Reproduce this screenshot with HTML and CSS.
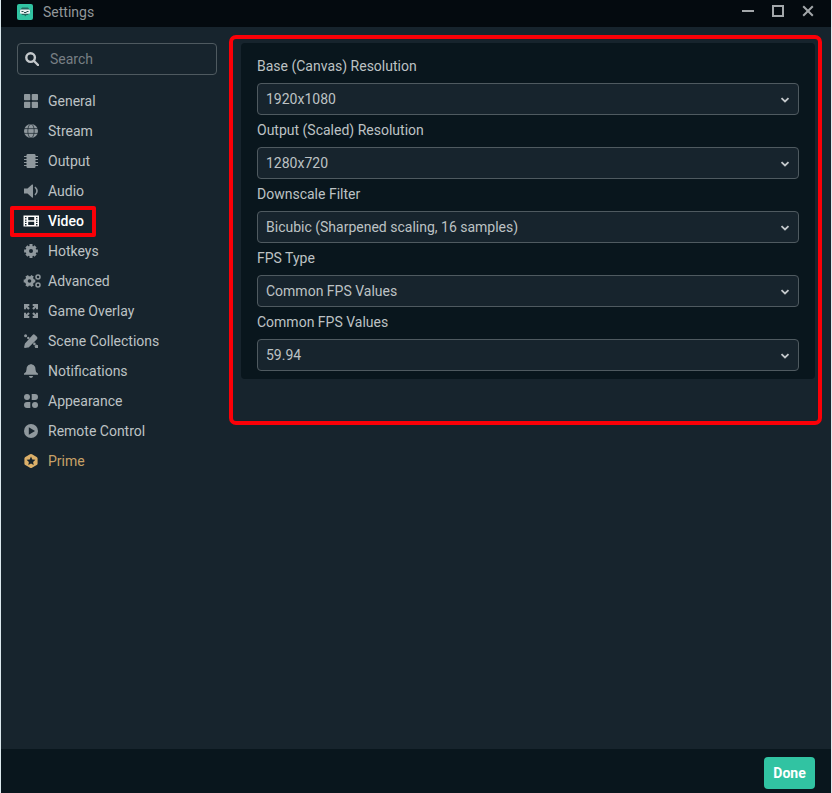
FILE: index.html
```html
<!DOCTYPE html>
<html lang="en">

<head>
    <meta charset="UTF-8">
    <title>Settings</title>
    <link rel="stylesheet" href="styles.css">
</head>

<body>
    <div class="window">
        <header class="titlebar">
            <svg class="logo" viewBox="0 0 16 16">
                <rect width="16" height="16" rx="2" fill="#31c3a2"/>
                <path d="M5 3.5h6L13.5 7 11 11H9.5L8 12.5 7.5 11H5L2.5 7z" fill="#24665f"/>
                <rect x="3" y="5.500" width="10" height="4.200" rx="1" fill="#e9f4f3"/>
                <path d="M4.500 7.500h2M9.500 7.500h2M7 8.500h2.500" stroke="#24494a"/>
            </svg>
            <span class="title">Settings</span>
            <div class="controls">
                <svg viewBox="0 0 12 12"><path d="M0 6h12" stroke-width="2"/></svg>
                <svg viewBox="0 0 12 12"><rect x="1" y="1" width="10" height="10" stroke-width="2"/></svg>
                <svg viewBox="0 0 12 12"><path d="M1.200 1.200l9.600 9.600M10.800 1.200l-9.600 9.600" stroke-width="2"/></svg>
            </div>
        </header>

        <div class="content">
            <aside class="sidebar">
                <div class="search">
                    <svg viewBox="0 0 14 14"><circle cx="5.600" cy="5.600" r="4.300"/><path d="M9 9l4 4"/></svg>
                    <input type="text" placeholder="Search">
                </div>
                <ul class="nav">
                    <li>
                        <svg viewBox="0 0 14 14"><rect width="6.300" height="6.300" rx=".8"/><rect x="7.700" width="6.300" height="6.300" rx=".8"/><rect y="7.700" width="6.300" height="6.300" rx=".8"/><rect x="7.700" y="7.700" width="6.300" height="6.300" rx=".8"/></svg>
                        General
                    </li>
                    <li>
                        <svg viewBox="0 0 14 14"><circle cx="7" cy="7" r="7"/><g class="cut"><ellipse cx="7" cy="7" rx="3.200" ry="7"/><path d="M0 4.600h14M0 9.400h14"/></g></svg>
                        Stream
                    </li>
                    <li>
                        <svg viewBox="0 0 14 14"><rect x="2.500" width="9" height="14" rx="1.200"/><path class="line" d="M0 2.500h14M0 5.500h14M0 8.500h14M0 11.500h14"/></svg>
                        Output
                    </li>
                    <li>
                        <svg viewBox="0 0 14 14"><path d="M0 4.500h3.500L8 .6Q9 0 9 1v12q0 1-1 .4L3.500 9.500H0z"/><path class="line thick" d="M11 3q4 4 0 8"/></svg>
                        Audio
                    </li>
                    <li class="active">
                        <svg viewBox="0 0 14 14"><path fill-rule="evenodd" d="M-.5 1.500h15.500v11H-.5zM1 3v1.300h1.500V3zm0 2.400v1.300h1.500V5.400zm0 2.400v1.300h1.500V7.800zm0 2.300v1.300h1.500v-1.300zM4.200 3v3.200h6V3zm0 4.700v3.300h6V7.700zM12 3v1.300h1.500V3zm0 2.400v1.300h1.500V5.400zm0 2.400v1.300h1.500V7.800zm0 2.300v1.300h1.500v-1.300z"/></svg>
                        Video
                        <span class="mark"></span>
                    </li>
                    <li>
                        <svg viewBox="0 0 14 14"><path class="teeth" d="M7 .1v13.800M.1 7h13.800M2.400 2.400l9.200 9.200M11.600 2.400l-9.200 9.200"/><circle cx="7" cy="7" r="5.300"/><circle class="hole" cx="7" cy="7" r="2"/></svg>
                        Hotkeys
                    </li>
                    <li>
                        <svg viewBox="0 0 14 14"><path class="teeth" d="M2.700 1.700l5.800 10.600M8.500 1.700L2.700 12.300M-.3 7h11.600"/><circle cx="5.500" cy="7" r="4.700"/><circle class="hole" cx="5.500" cy="7" r="1.800"/><circle class="ring" cx="14" cy="3" r="2"/><circle class="ring" cx="14" cy="11" r="2"/></svg>
                        Advanced
                    </li>
                    <li>
                        <svg viewBox="0 0 14 14"><path d="M0 0h5.300v2H3.600l2.200 2.200-1.600 1.600L2 3.600v1.700H0zM14 0v5.300h-2V3.600L9.800 5.800 8.200 4.200 10.400 2H8.700V0zM0 14V8.700h2v1.700l2.200-2.200 1.600 1.600L3.600 12h1.700v2zM14 14H8.700v-2h1.700L8.200 9.800l1.600-1.600 2.200 2.200V8.700h2z"/></svg>
                        Game Overlay
                    </li>
                    <li>
                        <svg viewBox="0 0 14 14"><path d="M8.600.9q1.200-1.200 2.400 0l1.900 1.900q1.200 1.200 0 2.400l-7.800 7.700q-.5.500-1.200.6L1 14q-1 0-.9-1l.7-3q.1-.6.6-1.100z"/><circle cx="1.600" cy="1.800" r="1.500"/><circle cx="4.300" cy="4" r="1.200"/><circle cx="10.400" cy="9.900" r="1.300"/><path d="M12 10.500l2 .8V14h-2.700l-.8-2z"/></svg>
                        Scene Collections
                    </li>
                    <li>
                        <svg viewBox="0 0 14 14"><path d="M6 .6q1-1 2 0 3.500.8 3.500 4.900 0 2.700 1.900 3.500.9.500.6 1.700H0Q-.3 9.500.6 9q1.900-.8 1.900-3.500Q2.500 1.400 6 .6zM4.800 12h4.400Q8.500 14 7 14t-2.200-2z"/></svg>
                        Notifications
                    </li>
                    <li>
                        <svg viewBox="0 0 14 14"><circle cx="3" cy="3" r="3"/><path d="M7.700 0H11q3 0 3 3t-3 3H7.700zM6.300 14H3q-3 0-3-3t3-3h3.300z"/><circle cx="11" cy="11" r="3"/></svg>
                        Appearance
                    </li>
                    <li>
                        <svg viewBox="0 0 14 14"><circle cx="7" cy="7" r="7"/><path class="hole" d="M4.800 3.300L11 7l-6.200 3.700z"/></svg>
                        Remote Control
                    </li>
                    <li class="prime">
                        <svg viewBox="0 0 14 14"><path d="M6 .3q1-.6 2 0l4.700 2.600q.9.600.9 1.600v5q0 1-.9 1.600L8 13.700q-1 .6-2 0l-4.700-2.600q-.9-.6-.9-1.600v-5q0-1 .9-1.600z"/><path class="hole" d="M7 2.600l1.300 2.800 3.100.4L9.100 8l.6 3L7 9.500 4.300 11l.6-3-2.300-2.200 3.100-.4z"/></svg>
                        Prime
                    </li>
                </ul>
            </aside>

            <main class="main">
                <div class="panel">
                    <label>Base (Canvas) Resolution</label>
                    <div class="select">1920x1080 <svg viewBox="0 0 8 6"><path d="M.5 1.200L4 4.500l3.500-3.300"/></svg></div>
                    <label>Output (Scaled) Resolution</label>
                    <div class="select">1280x720 <svg viewBox="0 0 8 6"><path d="M.5 1.200L4 4.500l3.500-3.300"/></svg></div>
                    <label>Downscale Filter</label>
                    <div class="select">Bicubic (Sharpened scaling, 16 samples) <svg viewBox="0 0 8 6"><path d="M.5 1.200L4 4.500l3.500-3.300"/></svg></div>
                    <label>FPS Type</label>
                    <div class="select">Common FPS Values <svg viewBox="0 0 8 6"><path d="M.5 1.200L4 4.500l3.500-3.300"/></svg></div>
                    <label>Common FPS Values</label>
                    <div class="select">59.94 <svg viewBox="0 0 8 6"><path d="M.5 1.200L4 4.500l3.500-3.300"/></svg></div>
                </div>
            </main>
        </div>

        <footer class="footer">
            <button class="button">Done</button>
        </footer>
    </div>
</body>

</html>
```
FILE: styles.css
```css
* {
    box-sizing: border-box;
}

body {
    margin: 0;
    background: #dce9ee;
    font-family: Roboto, sans-serif;
    font-size: 14px;
    color: #bdc2c4;
}

.window {
    display: flex;
    flex-direction: column;
    height: 793px;
    margin: 0 1px;
    background: #17242d;
}

/* Title bar */

.titlebar {
    display: flex;
    align-items: center;
    height: 27px;
    padding: 0 17px 3px 16px;
    background: #040a0f;
    color: #92979a;
}

.logo {
    width: 16px;
    height: 16px;
    margin-right: 10px;
}

.title {
    flex: 1;
}

.controls {
    display: flex;
    gap: 18px;
    margin-top: -2px;
}

.controls svg {
    width: 12px;
    height: 12px;
    fill: none;
    stroke: #a3a7aa;
}

.content {
    display: flex;
    flex: 1;
}

/* Sidebar */

.sidebar {
    width: 228px;
    padding: 16px 12px 0 16px;
}

.search {
    display: flex;
    align-items: center;
    width: 200px;
    height: 32px;
    padding-left: 7px;
    border: 1px solid #4f5a60;
    border-radius: 4px;
}

.search svg {
    width: 14px;
    height: 14px;
    fill: none;
    stroke: #c4c9cc;
    stroke-width: 2.4;
    stroke-linecap: round;
}

.search input {
    width: 150px;
    margin-left: 11px;
    padding: 0;
    border: none;
    outline: none;
    background: none;
    font: inherit;
    color: #bdc2c4;
}

.search input::placeholder {
    color: #787f84;
    opacity: 1;
}

.nav {
    margin: 11px 0 0;
    padding: 0 0 0 7px;
    list-style: none;
}

.nav li {
    position: relative;
    display: flex;
    align-items: center;
    gap: 10px;
    height: 30px;
    white-space: nowrap;
}

.nav svg {
    width: 14px;
    height: 14px;
    overflow: visible;
    fill: #8f989d;
}

.nav .cut,
.nav .line,
.nav .ring {
    fill: none;
    stroke: #17242d;
    stroke-width: 0.7;
}

.nav .line {
    stroke: #8f989d;
    stroke-width: 1;
}

.nav .thick {
    stroke-width: 1.6;
}

.nav .ring {
    stroke: #8f989d;
    stroke-width: 1.5;
}

.nav .teeth {
    stroke: #8f989d;
    stroke-width: 3;
}

.nav .hole {
    fill: #17242d;
}

.nav .active {
    color: #fff;
    font-weight: 500;
}

.nav .active svg {
    fill: #fff;
}

.nav .prime {
    color: #c7a167;
}

.nav .prime svg {
    fill: #dcb069;
}

/* Red frame around the current page */

.mark {
    position: absolute;
    left: -14px;
    top: 0;
    width: 86px;
    height: 31px;
    border: 4px solid #fb0007;
    border-radius: 2px;
}

/* Settings form */

.main {
    width: 593px;
    height: 390px;
    margin-top: 8px;
    padding: 4px 3px 0 8px;
    border: 4px solid #fb0007;
    border-radius: 7px;
}

.panel {
    padding: 8px 16px;
    border-radius: 4px;
    background: #09161d;
}

.panel label {
    display: block;
    height: 32px;
    line-height: 30px;
}

.select {
    display: flex;
    align-items: center;
    justify-content: space-between;
    height: 32px;
    padding: 0 9px 0 8px;
    border: 1px solid #4f5a60;
    border-radius: 4px;
    background: #17242d;
}

.select svg {
    width: 8px;
    height: 6px;
    margin-top: 2px;
    overflow: visible;
    fill: none;
    stroke: #c4c9cc;
    stroke-width: 1.8;
}

/* Footer */

.footer {
    display: flex;
    justify-content: flex-end;
    height: 44px;
    padding: 8px 16px 0 0;
    background: #09161d;
}

.button {
    width: 51px;
    height: 32px;
    padding: 0;
    border: none;
    border-radius: 4px;
    background: #31c3a2;
    color: #fff;
    font: 700 14px Roboto, sans-serif;
    cursor: pointer;
}
```
